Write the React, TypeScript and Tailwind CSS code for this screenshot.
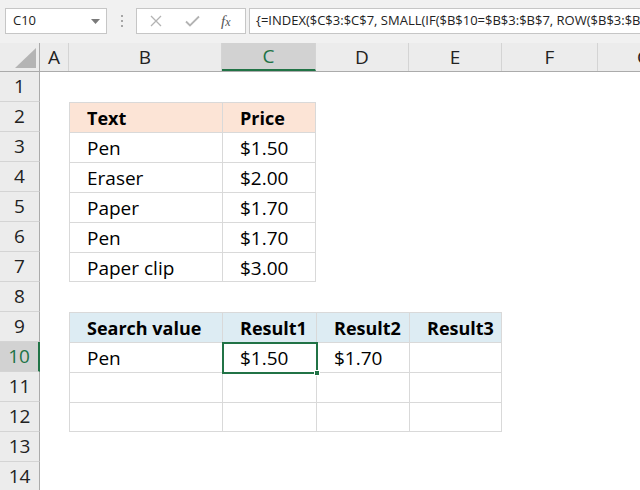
import clsx from "clsx"

const cols = [
  { key: "A", w: "w-[29px]" },
  { key: "B", w: "w-[153px]" },
  { key: "C", w: "w-[94px]" },
  { key: "D", w: "w-[93px]" },
  { key: "E", w: "w-[93px]" },
  { key: "F", w: "w-[96px]" },
  { key: "G", w: "w-[93px]" },
]

type Cell = { text?: string; bold?: boolean }

// sheet content keyed by row number, then column letter
const data: Record<number, Record<string, Cell>> = {
  2: { B: { text: "Text", bold: true }, C: { text: "Price", bold: true } },
  3: { B: { text: "Pen" }, C: { text: "$1.50" } },
  4: { B: { text: "Eraser" }, C: { text: "$2.00" } },
  5: { B: { text: "Paper" }, C: { text: "$1.70" } },
  6: { B: { text: "Pen" }, C: { text: "$1.70" } },
  7: { B: { text: "Paper clip" }, C: { text: "$3.00" } },
  9: {
    B: { text: "Search value", bold: true },
    C: { text: "Result1", bold: true },
    D: { text: "Result2", bold: true },
    E: { text: "Result3", bold: true },
  },
  10: { B: { text: "Pen" }, C: { text: "$1.50" }, D: { text: "$1.70" } },
}

const tables = [
  { r1: 2, r2: 7, c1: 1, c2: 2, head: "bg-[#fce4d6]" },
  { r1: 9, r2: 12, c1: 1, c2: 4, head: "bg-[#ddecf3]" },
]

const formula =
  '{=INDEX($C$3:$C$7, SMALL(IF($B$10=$B$3:$B$7, ROW($B$3:$B$7)-MIN(ROW($B$3:$B$7))+1, ""), COLUMNS($A$1:A1)))}'

function Toolbar() {
  return (
    <div className="flex h-[43px] items-start bg-[#f1f1f1] pt-[8px]">
      {/* Name box */}
      <div className="ml-[5px] flex h-[26px] w-[102px] shrink-0 items-center justify-between border border-[#c6c6c6] bg-white pl-[7px] pr-[6px] text-[13px] text-[#222]">
        <span>C10</span>
        <svg width="9" height="5" viewBox="0 0 9 5">
          <path d="M0 0h9L4.5 5z" fill="#7a7a7a" />
        </svg>
      </div>
      {/* drag dots */}
      <div className="ml-[14px] mr-[13px] flex h-[26px] flex-col items-center justify-center gap-[3px]">
        <span className="h-[2px] w-[2px] bg-[#a6a6a6]" />
        <span className="h-[2px] w-[2px] bg-[#a6a6a6]" />
        <span className="h-[2px] w-[2px] bg-[#a6a6a6]" />
      </div>
      {/* cancel / enter / fx */}
      <div className="flex h-[26px] w-[110px] shrink-0 items-center border border-[#c6c6c6] bg-white">
        <svg className="ml-[13px]" width="12" height="12" viewBox="0 0 12 12">
          <path d="M1 1l10 10M11 1L1 11" stroke="#b3b3b3" strokeWidth="1.3" />
        </svg>
        <svg className="ml-[23px]" width="15" height="12" viewBox="0 0 15 12">
          <path d="M1 6.5l4 4L14 1.5" stroke="#b3b3b3" strokeWidth="1.8" fill="none" />
        </svg>
        <span className="ml-[21px] font-['Liberation_Serif',serif] text-[15px] italic text-[#555]">
          f<span className="text-[12px]">x</span>
        </span>
      </div>
      {/* formula input */}
      <div className="ml-[3px] flex h-[26px] min-w-0 flex-1 items-center overflow-hidden whitespace-nowrap border border-r-0 border-[#c6c6c6] bg-white pl-[6px] text-[13px] text-[#222]">
        {formula}
      </div>
    </div>
  )
}

function ColumnHeader() {
  return (
    <div className="flex h-[29px] border-b border-[#ababab] bg-[#ececec]">
      <div className="relative w-[40px] shrink-0 border-r border-[#ababab]">
        <svg className="absolute left-[15px] top-[5px]" width="21" height="20" viewBox="0 0 21 20">
          <path d="M21 0v20H0z" fill="#b4b4b4" />
        </svg>
      </div>
      {cols.map((c) => (
        <div
          key={c.key}
          className={clsx(
            c.w,
            "flex shrink-0 items-center justify-center border-r border-[#d4d4d4] text-[19px]",
            c.key === "C"
              ? "border-b-2 border-b-[#217346] bg-[#d2d2d2] text-[#217346]"
              : "text-[#222]"
          )}
        >
          {c.key}
        </div>
      ))}
    </div>
  )
}

function SheetRow({ r }: { r: number }) {
  const selected = r === 10
  return (
    <div className="flex h-[30px]">
      <div
        className={clsx(
          "flex w-[40px] shrink-0 items-center justify-center border-b border-[#d4d4d4] text-[19px]",
          selected
            ? "border-r-2 border-r-[#217346] bg-[#d2d2d2] text-[#217346]"
            : "border-r border-r-[#ababab] bg-[#ececec] text-[#222]"
        )}
      >
        {r}
      </div>
      {cols.map((c, ci) => {
        const t = tables.find((t) => r >= t.r1 && r <= t.r2 && ci >= t.c1 && ci <= t.c2)
        const cell = data[r]?.[c.key]
        return (
          <div
            key={c.key}
            className={clsx(
              c.w,
              "relative flex shrink-0 items-center whitespace-nowrap pl-[17px] pt-[2px] text-black",
              cell?.bold ? "text-[18px] font-bold" : "text-[19px]",
              t && "border-l border-t border-[#d9d9d9]",
              t && r === t.r1 && t.head,
              t && r === t.r2 && "border-b",
              t && ci === t.c2 && "border-r"
            )}
          >
            {cell?.text}
            {selected && c.key === "C" && (
              <div className="absolute -left-[1px] -top-[1px] z-10 h-[32px] w-[96px] border-2 border-[#217346]">
                <div className="absolute -bottom-[4px] -right-[4px] h-[6px] w-[6px] border border-white bg-[#217346]" />
              </div>
            )}
          </div>
        )
      })}
    </div>
  )
}

export default function App() {
  const rows = Array.from({ length: 14 }, (_, i) => i + 1)
  return (
    <div className="h-[490px] w-[640px] overflow-hidden bg-white font-['Open_Sans',sans-serif]">
      <Toolbar />
      <ColumnHeader />
      {rows.map((r) => (
        <SheetRow key={r} r={r} />
      ))}
    </div>
  )
}
